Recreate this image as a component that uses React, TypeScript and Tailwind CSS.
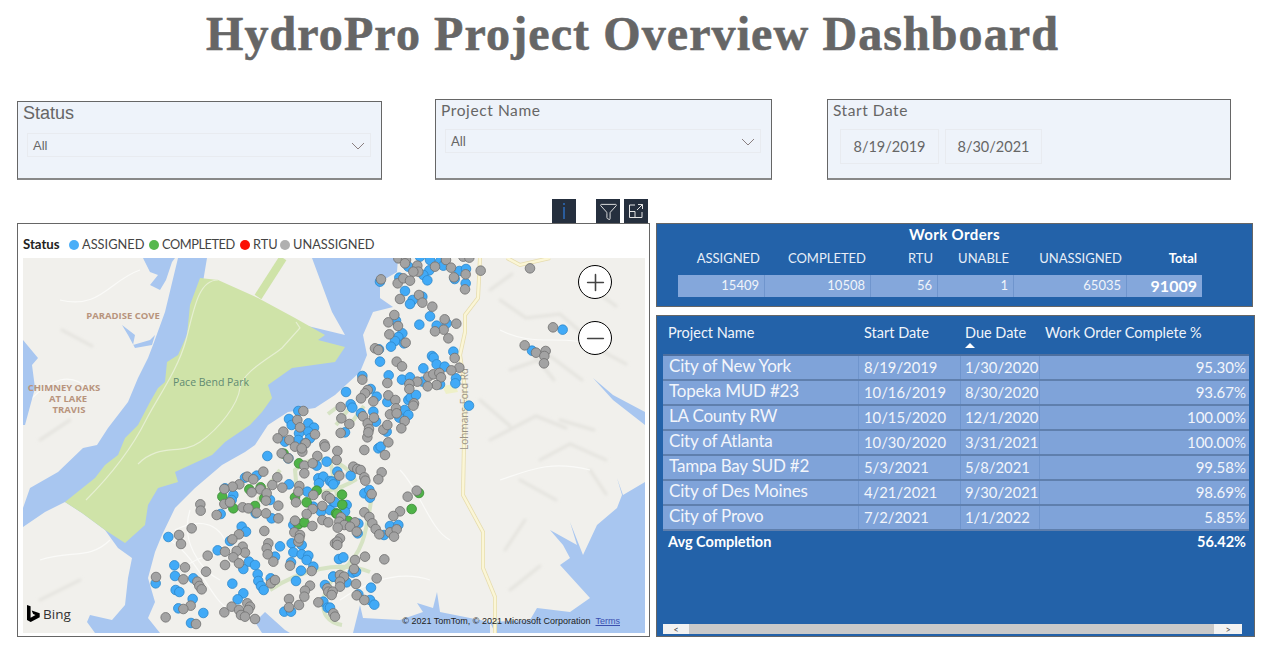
import { Funnel, Plus, Minus } from 'lucide-react'

// dots were read off per map crop, so every list carries its crop offset
type Dot = [number, number]
const crop = (ox: number, oy: number, dots: Dot[]): Dot[] =>
  dots.map(([x, y]) => [ox + x / 3, oy + y / 3] as Dot)

const blueDots: Dot[] = [
  ...crop(15, 255, [[850,468],[822,492],[830,510],[880,505],[897,518],[880,530],[852,535],[850,555],[885,550],[810,560],[870,565]]),
  ...crop(330, 255, [[150,80],[208,68],[225,108],[248,135],[240,147],[277,125],[300,184],[268,209],[320,212],[350,205],[198,197],[217,235],[205,246],[195,258],[183,275],[222,265],[147,283],[150,320],[306,303],[311,308],[320,328],[344,335],[280,340],[370,290],[176,361],[97,363],[216,374],[240,367],[278,380],[378,370],[376,385],[330,388],[48,411],[122,402],[140,425],[172,441],[235,435],[242,428],[258,420],[62,448],[67,458],[93,475],[130,470],[138,500],[224,465],[235,480],[208,488],[45,532],[170,530],[417,452],[698,224],[606,287],[300,15],[330,20],[340,32],[388,48],[408,42],[298,46],[280,60],[292,76],[374,72],[407,85],[270,5],[235,35]]),
  ...crop(15, 445, [[757,33],[820,40],[690,98],[725,92],[822,118],[877,140],[905,62],[935,50],[910,100],[925,95],[945,108],[960,110],[912,115],[630,130],[655,150],[650,165],[765,165],[895,185],[918,200],[945,195],[955,170],[617,207],[722,205],[770,220],[680,245],[693,260],[645,288],[460,276],[608,316],[835,240],[830,295],[860,300],[835,322],[860,328],[880,332],[875,345],[795,304],[780,335],[702,350],[720,360],[685,372],[478,361],[480,393],[535,400],[422,415],[482,435],[493,441],[652,416],[728,388],[730,408],[738,423],[746,435],[685,445],[668,463],[533,462],[490,490],[565,504],[528,534],[808,500],[828,500],[858,377],[843,408],[895,365],[828,352],[930,420],[925,470],[938,488],[955,395],[767,400]]),
  ...crop(330, 445, [[145,10],[152,5],[22,80],[62,92],[5,110],[10,118],[103,145],[118,135],[120,158],[15,172],[50,180],[85,236],[83,265],[162,270],[180,243],[205,240],[27,342],[40,337],[68,383],[78,380],[10,395],[50,412],[123,428],[85,448],[120,465],[133,479],[0,488],[45,200]]),
]

const greenDots: Dot[] = [
  ...crop(15, 445, [[806,26],[852,55],[622,155],[703,133],[737,127],[655,190],[720,183],[748,160],[840,157],[875,172],[905,137],[850,238],[868,232],[963,205]]),
  ...crop(330, 445, [[36,149],[37,179],[22,207],[55,228],[267,144],[245,192]]),
]

const greyDots: Dot[] = [
  ...crop(15, 255, [[865,468],[847,495],[855,517],[900,538],[805,530],[788,550],[823,555],[872,565],[928,568]]),
  ...crop(330, 255, [[205,10],[228,15],[225,25],[262,32],[265,50],[250,50],[315,35],[348,15],[363,38],[400,5],[418,8],[452,47],[600,40],[153,73],[203,85],[220,70],[240,77],[372,67],[407,58],[405,103],[210,132],[267,120],[277,143],[307,155],[193,180],[175,202],[204,213],[344,193],[379,206],[341,224],[315,229],[355,250],[178,238],[227,263],[135,280],[145,285],[374,309],[200,320],[216,334],[388,338],[364,346],[295,365],[310,358],[328,354],[333,367],[320,390],[293,394],[262,380],[238,387],[238,402],[172,384],[97,374],[113,405],[105,415],[93,430],[130,439],[175,421],[196,435],[32,456],[34,490],[58,507],[32,534],[112,547],[99,484],[113,505],[132,488],[117,522],[115,532],[160,524],[172,510],[180,478],[198,460],[200,475],[224,498],[214,520],[252,445],[250,452],[175,562],[669,217],[584,271],[618,293],[647,288],[643,303],[642,325]]),
  ...crop(15, 445, [[800,25],[820,40],[840,5],[862,20],[860,10],[930,5],[907,33],[868,62],[893,55],[868,85],[745,80],[697,95],[715,103],[673,118],[653,125],[628,132],[787,97],[772,120],[802,128],[853,123],[850,140],[736,133],[710,142],[755,145],[753,167],[843,172],[895,150],[935,153],[945,160],[922,183],[628,177],[645,172],[683,187],[700,190],[790,182],[725,203],[753,205],[790,220],[893,192],[875,207],[840,227],[922,225],[940,232],[892,243],[556,178],[557,197],[605,210],[530,250],[748,258],[838,262],[855,270],[850,290],[853,280],[672,268],[652,283],[492,270],[498,297],[760,295],[755,310],[758,328],[683,305],[690,323],[665,318],[655,337],[672,355],[630,320],[578,332],[630,360],[775,350],[825,362],[510,367],[573,380],[505,403],[423,396],[547,410],[553,423],[560,433],[768,415],[780,405],[890,378],[885,422],[870,437],[868,455],[822,462],[852,480],[822,487],[910,472],[937,430],[940,440],[955,505],[527,482],[505,492],[452,517],[543,537],[628,502],[650,485],[672,495],[697,475],[705,485],[700,495],[678,510],[690,515],[720,522],[960,295]]),
  ...crop(330, 445, [[22,18],[20,45],[103,15],[165,30],[70,65],[82,72],[92,75],[28,92],[103,97],[106,107],[155,82],[145,103],[125,147],[260,137],[233,155],[210,199],[190,213],[103,202],[118,216],[127,235],[137,252],[148,268],[33,217],[28,230],[75,232],[43,240],[60,245],[23,248],[80,260],[180,262],[200,253],[192,275],[30,280],[22,290],[22,300],[105,335],[75,345],[163,343],[72,372],[30,390],[42,395],[30,410],[30,425],[78,417],[140,400],[80,451],[103,465],[8,440],[5,450],[15,515]]),
]

const LOHMANS_ROAD = '480,258 478,298 465,315 465,332 460,355 465,388 464,442 463,495 483,532 483,568 495,597 495,633'

const workOrders = [
  { label: 'ASSIGNED', value: '15409', width: 'w-[87px]' },
  { label: 'COMPLETED', value: '10508', width: 'w-[106px]' },
  { label: 'RTU', value: '56', width: 'w-[67px]' },
  { label: 'UNABLE', value: '1', width: 'w-[76px]' },
  { label: 'UNASSIGNED', value: '65035', width: 'w-[113px]' },
]

const projects = [
  ['City of New York', '8/19/2019', '1/30/2020', '95.30%'],
  ['Topeka MUD #23', '10/16/2019', '8/30/2020', '93.67%'],
  ['LA County RW', '10/15/2020', '12/1/2020', '100.00%'],
  ['City of Atlanta', '10/30/2020', '3/31/2021', '100.00%'],
  ['Tampa Bay SUD #2', '5/3/2021', '5/8/2021', '99.58%'],
  ['City of Des Moines', '4/21/2021', '9/30/2021', '98.69%'],
  ['City of Provo', '7/2/2021', '1/1/2022', '5.85%'],
]

function Chevron() {
  return (
    <svg width="14" height="8" viewBox="0 0 14 8" fill="none" stroke="#8a7f80" strokeWidth="1">
      <path d="M1 1l6 6 6-6" />
    </svg>
  )
}

function Dropdown({ value }: { value: string }) {
  return (
    <div className="flex h-[24px] items-center justify-between border border-[#e8ebf0] pl-[5px] pr-[5px] pt-[2px] text-[13px] text-[#666]">
      <span>{value}</span>
      <Chevron />
    </div>
  )
}

function LegendItem({ color, label, className }: { color: string; label: string; className: string }) {
  return (
    <div className={`flex items-center gap-[3px] ${className}`}>
      <span className={`h-[10px] w-[10px] rounded-full ${color}`} />
      <span>{label}</span>
    </div>
  )
}

function BasemapSvg() {
  return (
    <svg className="block h-[375px] w-[622px]" viewBox="23 258 622 375">
      <defs>
        <filter id="soft" x="-10%" y="-10%" width="120%" height="120%">
          <feGaussianBlur stdDeviation="1.4" />
        </filter>
      </defs>
      <rect x="23" y="258" width="622" height="375" fill="#f1f0ec" />
      {/* hill shading */}
      <g fill="none" stroke="#e4e3de" strokeWidth="3" strokeLinecap="round" filter="url(#soft)">
        <path d="M500 300l26 18 34-4 30 26M510 370l40-14 32 24M490 440l46-24 30 12M520 480l36 20M505 550l20-30M540 460l30-16 36 16M590 470l16 24M490 290l22-16M580 280l36 26M530 350l24 30M480 400l30 26M560 420l34 10M600 350l26 14M510 590l30-24M62 330l30 16M40 440l30-20M40 600l40-20" />
      </g>
      {/* streets */}
      <g fill="none" stroke="#fafaf8" strokeWidth="1.2">
        <path d="M30 400c20-20 40-30 60-10M60 300c40 10 50-20 80-30M500 480c30-10 50-20 90-10M500 330c40 20 60 0 110 20M170 540c30 20 40 60 60 70M180 570c40-30 60-10 90 10M40 560c30-10 50 0 70-20M340 600c30-20 60-30 90-20M175 530c20-10 40-10 50 10M190 510c-10 30 10 60 30 70M400 470c20 20 30 60 50 70" />
      </g>
      {/* lake */}
      <polygon
        fill="#a8c6f0"
        points="178,258 165,312 153,345 148,358 138,378 128,402 108,428 97,445 83,448 58,472 30,488 23,508 23,527 45,512 65,502 82,513 105,530 118,548 132,558 128,578 125,605 112,620 90,615 87,622 95,633 160,633 148,618 155,602 148,578 155,552 162,535 175,508 195,488 222,465 245,452 255,445 268,425 288,412 315,408 335,395 360,372 367,355 363,335 373,312 393,307 380,298 380,282 397,272 398,258"
      />
      <polygon fill="#a8c6f0" points="143,258 150,272 158,275 150,285 160,290 166,280 172,262 175,258" />
      <polygon fill="#a8c6f0" points="122,325 135,335 133,345 150,340 155,335 152,345 135,348 128,335" />
      <polygon fill="#a8c6f0" points="23,340 38,358 32,365 35,388 25,425 23,425" />
      <polygon fill="#a8c6f0" points="645,482 623,495 617,478 622,495 617,508 597,525 583,555 570,522 577,545 550,530 563,545 570,558 560,565 590,598 570,612 537,608 530,620 490,622 495,633 645,633" />
      <polygon fill="#a8c6f0" points="437,592 433,608 417,603 423,612 400,620 363,618 360,605 353,633 490,633 490,622 440,612" />
      <polygon fill="#a8c6f0" points="265,612 285,630 290,633 262,633 255,622" />
      <polygon fill="#a8c6f0" points="593,378 613,395 645,412 645,425 613,400" />
      {/* land north of the park */}
      <polygon fill="#f1f0ec" points="207,258 312,258 322,285 332,312 345,335 200,300" />
      <path d="M283 258L258 297" stroke="#cfe3a8" strokeWidth="8" />
      {/* Pace Bend Park */}
      <polygon
        fill="#cfe3a8"
        points="200,278 218,280 258,298 295,318 325,335 318,340 345,347 335,362 292,368 268,385 272,398 262,412 250,425 225,442 212,455 175,472 178,482 158,488 148,505 145,525 125,543 105,530 82,513 65,502 95,478 105,465 118,455 125,438 138,425 150,402 158,388 165,382 167,362 178,355 187,335 190,305"
      />
      <g fill="none" stroke="#e6efd2" strokeWidth="1.2">
        <path d="M218 280c-20 0-24 30-32 60s-30 60-40 80-30 50-60 80M296 322l4 6-18 20c-12 10-40 24-42 40s-20 40-40 54-40 0-62 22" />
      </g>
      {/* green trails on the peninsula */}
      <g fill="none" stroke="#d6e3c4" strokeWidth="4">
        <path d="M295 470c20-20 50-10 60 10-16 10-40 16-58 12zM372 495c-6 40-10 60-30 75s-30 50 0 55M270 590c30-20 70-30 100-18M280 470l-22 30M272 480l-22 34M330 460l10 50M336 425l16-20M346 430l18-24M328 414l8-6" />
      </g>
      <polygon fill="#eef0c8" points="442,386 455,384 458,392 446,394" />
      <polyline points={LOHMANS_ROAD} fill="none" stroke="#e6dcae" strokeWidth="4" />
      <polyline points={LOHMANS_ROAD} fill="none" stroke="#fbf6d6" strokeWidth="2.5" />
      <polyline points="507,258 520,265 550,258" fill="none" stroke="#e6dcae" strokeWidth="4" />
      <polyline points="507,258 520,265 550,258" fill="none" stroke="#fbf6d6" strokeWidth="2.5" />
      {/* place names */}
      <g fontFamily="'Open Sans', sans-serif" fontSize="9.5" fontWeight="700" fill="#b8947d" textAnchor="middle">
        <text x="123" y="319">PARADISE COVE</text>
        <text x="64" y="391">CHIMNEY OAKS</text>
        <text x="68" y="402">AT LAKE</text>
        <text x="69" y="413">TRAVIS</text>
      </g>
      <text x="211" y="386" fontFamily="'Open Sans', sans-serif" fontSize="10.5" fill="#5f8a72" textAnchor="middle">Pace Bend Park</text>
      <text transform="translate(468 450) rotate(-90)" fontFamily="'Open Sans', sans-serif" fontSize="10" fill="#9a9488">Lohmans Ford Rd</text>
      {/* work order dots */}
      {blueDots.map(([x, y], i) => (
        <circle key={`b${i}`} cx={x} cy={y} r="4.8" fill="#41aaf7" stroke="#2f86c8" strokeWidth="0.8" />
      ))}
      {greenDots.map(([x, y], i) => (
        <circle key={`g${i}`} cx={x} cy={y} r="4.8" fill="#4fb348" stroke="#3a8a35" strokeWidth="0.8" />
      ))}
      {greyDots.map(([x, y], i) => (
        <circle key={`u${i}`} cx={x} cy={y} r="4.8" fill="#a3a3a3" stroke="#707070" strokeWidth="0.8" />
      ))}
    </svg>
  )
}

function MapCard() {
  return (
    <div className="h-[414px] w-[633px] shrink-0 border border-[#666] bg-white pl-[5px] pt-[9px]">
      <div className="flex h-[25px] items-center pb-[1px] text-[12.8px] text-[#444] font-['Lato',sans-serif]">
        <span className="font-bold text-[#222] w-[46px] text-[13.2px]">Status</span>
        <LegendItem color="bg-[#4aaef8]" label="ASSIGNED" className="w-[80px]" />
        <LegendItem color="bg-[#56b84e]" label="COMPLETED" className="w-[91px] tracking-[-0.45px]" />
        <LegendItem color="bg-[#fb0f05]" label="RTU" className="w-[40px]" />
        <LegendItem color="bg-[#b0b0b0]" label="UNASSIGNED" className="w-[100px]" />
      </div>
      <div className="relative h-[375px] w-[622px]">
        <BasemapSvg />
        <button className="absolute left-[555px] top-[7px] flex h-[34px] w-[34px] items-center justify-center rounded-full border-[1.5px] border-black bg-white">
          <Plus size={27} strokeWidth={1.4} color="#444" />
        </button>
        <button className="absolute left-[555px] top-[63px] flex h-[34px] w-[34px] items-center justify-center rounded-full border-[1.5px] border-black bg-white">
          <Minus size={27} strokeWidth={1.4} color="#444" />
        </button>
        <div className="absolute bottom-[9px] left-[4px] flex items-center gap-[3px] text-[13.5px] text-[#333] font-['Open_Sans',sans-serif]">
          <svg width="13" height="17" viewBox="0 0 13 17" fill="#000">
            <path d="M0 0l3.600 1.300v11.500l4.900-2.800-2.400-1.100-1.400-3.500 8 2.800v4L3.700 17 0 15z" />
          </svg>
          <span>Bing</span>
        </div>
        <div className="absolute bottom-[5px] right-[25px] flex gap-[5px] text-[9px] text-[#222] font-['Liberation_Sans',sans-serif]">
          <span>© 2021 TomTom, © 2021 Microsoft Corporation</span>
          <span className="text-[#3a4fb0] underline">Terms</span>
        </div>
      </div>
    </div>
  )
}

function WorkOrdersCard() {
  return (
    <div className="h-[84px] w-[597px] border border-[#666] bg-[#2362a9] font-['Lato',sans-serif] text-white">
      <div className="text-center text-[15px] font-bold leading-[20px] tracking-[0.4px]">Work Orders</div>
      <div className="ml-[21px] mt-[5px] flex h-[20px] items-center text-[13px] text-[#e8eef7]">
        {workOrders.map((c) => (
          <div key={c.label} className={`${c.width} pr-[5px] text-right`}>{c.label}</div>
        ))}
        <div className="w-[79px] pr-[9px] text-right font-bold text-white">Total</div>
      </div>
      <div className="ml-[21px] mt-[6px] flex h-[22px] w-[524px] items-center bg-[#84a7db] text-[13px] text-[#f0f4fa]">
        {workOrders.map((c) => (
          <div key={c.label} className={`${c.width} flex h-full items-center justify-end border-r border-[#6f95cd] pr-[5px]`}>{c.value}</div>
        ))}
        <div className="flex h-full flex-1 items-center justify-end pr-[5px] text-[16px] font-bold text-white">91009</div>
      </div>
    </div>
  )
}

function ProjectTable() {
  return (
    <div className="mt-[8px] flex h-[322px] w-[599px] flex-col border border-[#666] bg-[#2362a9] pl-[6px] pr-[5px] font-['Lato',sans-serif] text-white">
      <div className="flex h-[38px] shrink-0 items-center pb-[4px] text-[14.5px] text-[#f0f4fa]">
        <div className="w-[196px] pl-[5px]">Project Name</div>
        <div className="w-[102px] pl-[5px]">Start Date</div>
        <div className="relative w-[79px] pl-[4px]">
          Due Date
          <span className="absolute left-[4px] top-[21px] h-0 w-0 border-x-[5px] border-b-[5px] border-x-transparent border-b-white" />
        </div>
        <div className="pl-[5px]">Work Order Complete %</div>
      </div>
      <div className="border-t-2 border-[#4d6f9f]">
        {projects.map(([name, start, due, pct]) => (
          <div key={name} className="flex h-[25px] items-center border-b-2 border-[#5f7fad] bg-[#7fa3d9] text-[#f2f5fb]">
            <div className="flex h-full w-[196px] items-center border-r border-[#6f95cd] pb-[3px] pl-[6px] text-[17px] tracking-[-0.2px]">{name}</div>
            <div className="flex h-full w-[102px] items-center border-r border-[#6f95cd] pb-[1px] pl-[5px] text-[14.8px]">{start}</div>
            <div className="flex h-full w-[79px] items-center border-r border-[#6f95cd] pb-[1px] pl-[4px] text-[14.8px]">{due}</div>
            <div className="flex h-full flex-1 items-center justify-end pb-[1px] pr-[3px] text-[15px]">{pct}</div>
          </div>
        ))}
      </div>
      <div className="flex h-[22px] items-center justify-between pl-[5px] pr-[3px] text-[14.5px] font-bold">
        <span>Avg Completion</span>
        <span>56.42%</span>
      </div>
      <div className="mt-auto mb-[2px] flex h-[10px] w-[579px] items-center justify-between bg-[#c9c9c9] text-[#444]">
        <div className="flex h-full w-[26px] items-center justify-center bg-[#f2f2f2] text-[9px] leading-none">&lt;</div>
        <div className="flex h-full w-[28px] items-center justify-center bg-[#f2f2f2] text-[9px] leading-none">&gt;</div>
      </div>
    </div>
  )
}

export default function App() {
  return (
    <div className="h-[649px] w-[1272px] overflow-hidden bg-white pl-[17px] font-['Liberation_Sans',sans-serif]">
      <h1 className="h-[70px] pr-[24px] pt-[6px] text-center font-['Liberation_Serif',serif] text-[48px] font-bold leading-[56px] tracking-[1.1px] text-[#666] [-webkit-text-stroke:0.6px_#666]">
        HydroPro Project Overview Dashboard
      </h1>

      {/* Slicers */}
      <div className="mt-[29px] flex h-[81px] items-end">
        <div className="h-[79px] w-[365px] border border-[#666] border-b-2 border-b-[#888] bg-[#eef3fa] px-[5px]">
          <div className="text-[18px] leading-[22px] text-[#666]">Status</div>
          <div className="ml-[4px] mr-[5px] mt-[9px]"><Dropdown value="All" /></div>
        </div>
        <div className="ml-[53px] h-[81px] w-[337px] border border-[#666] border-b-2 border-b-[#888] bg-[#eef3fa] px-[5px] font-['Lato',sans-serif]">
          <div className="text-[15.5px] leading-[21px] tracking-[0.6px] text-[#666]">Project Name</div>
          <div className="ml-[4px] mr-[5px] mt-[8px]"><Dropdown value="All" /></div>
        </div>
        <div className="ml-[55px] h-[81px] w-[404px] border border-[#666] border-b-2 border-b-[#888] bg-[#eef3fa] px-[5px] font-['Lato',sans-serif]">
          <div className="text-[15.5px] leading-[20px] tracking-[0.55px] text-[#666]">Start Date</div>
          <div className="ml-[7px] mt-[9px] flex gap-[6px] text-[14.5px] text-[#666]">
            <div className="flex h-[35px] w-[99px] items-center justify-center border border-[#e8ebf0]">8/19/2019</div>
            <div className="flex h-[35px] w-[97px] items-center justify-center border border-[#e8ebf0]">8/30/2021</div>
          </div>
        </div>
      </div>

      {/* Visual header icons */}
      <div className="mt-[19px] flex h-[24px] w-[631px] justify-end text-[#e5e5e5]">
        <div className="flex h-[24px] w-[24px] flex-col items-center justify-center gap-[2px] bg-[#252f3e]">
          <span className="h-[2px] w-[1.5px] bg-[#2a5c9c]" />
          <span className="h-[12px] w-[1.5px] bg-[#2a5c9c]" />
        </div>
        <div className="ml-[20px] flex h-[24px] w-[24px] items-center justify-center bg-[#252f3e]">
          <Funnel size={19} strokeWidth={1.2} />
        </div>
        <div className="ml-[4px] flex h-[24px] w-[24px] items-center justify-center bg-[#252f3e]">
          <svg width="16" height="16" viewBox="0 0 16 16" fill="none" stroke="#e5e5e5" strokeWidth="1">
            <path d="M7 2H1.500v12.500H14V9M9 7l5.500-5.500M10 1.500h4.500V6M1.500 8.500H7V14.500" />
          </svg>
        </div>
      </div>

      <div className="flex gap-[6px]">
        <MapCard />
        <div>
          <WorkOrdersCard />
          <ProjectTable />
        </div>
      </div>
    </div>
  )
}
